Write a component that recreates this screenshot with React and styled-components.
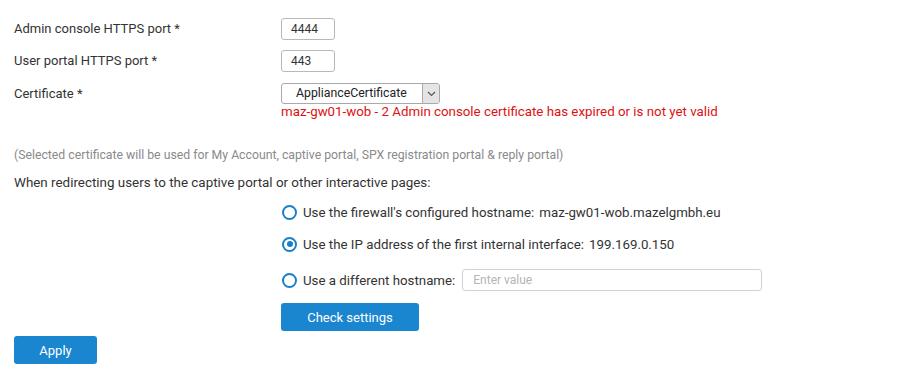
import React from 'react';
import styled, { createGlobalStyle } from 'styled-components';

const GlobalStyle = createGlobalStyle`
  body {
    margin: 0;
    background: #ffffff;
    font-family: Roboto, "Liberation Sans", sans-serif;
    font-size: 13px;
    color: #333333;
  }
`;

const Page = styled.div`
  padding: 18px 14px 0 14px;
`;

const FieldRow = styled.div`
  display: grid;
  grid-template-columns: 267px auto;
  align-items: start;
  margin-bottom: ${p => p.gap ?? 10}px;
`;

const Label = styled.label`
  line-height: 22px;
  color: #333333;
  padding-top: ${p => p.offset || 0}px;
`;

const PortInput = styled.div`
  box-sizing: border-box;
  width: 54px;
  height: 22px;
  border: 1px solid #b8b8b8;
  border-radius: 3px;
  padding: 0 9px;
  line-height: 20px;
  font-size: 12px;
  color: #333333;
`;

const Select = styled.div`
  box-sizing: border-box;
  display: flex;
  width: 159px;
  height: 21px;
  margin-top: 1px;
  border: 1px solid #a9a9a9;
  border-radius: 3px;
  overflow: hidden;
`;

const SelectValue = styled.div`
  flex: 1;
  padding-left: 14px;
  line-height: 19px;
  font-size: 12.3px;
  color: #222222;
`;

const SelectArrow = styled.div`
  width: 16px;
  border-left: 1px solid #a9a9a9;
  background: #e4e4e4;
  display: flex;
  align-items: center;
  justify-content: center;
`;

const ErrorText = styled.div`
  color: #dd1111;
  font-size: 13.3px;
  line-height: 16px;
`;

const Note = styled.div`
  margin-top: 27px;
  color: #8a8a8a;
  font-size: 12.25px;
  line-height: 16px;
`;

const Intro = styled.div`
  margin-top: 12px;
  font-size: 13.4px;
  line-height: 16px;
  color: #333333;
`;

const Options = styled.div`
  margin-left: 267px;
  margin-top: 5px;
  display: flex;
  flex-direction: column;
  font-size: 13.3px;
`;

const Option = styled.div`
  display: flex;
  align-items: center;
  height: ${p => p.h || 32}px;
  gap: 6px;
`;

const Radio = styled.span`
  box-sizing: border-box;
  width: 15px;
  height: 15px;
  margin-left: 1px;
  border-radius: 50%;
  border: 2px solid #1b7fc7;
  display: flex;
  align-items: center;
  justify-content: center;
  flex-shrink: 0;

  &::after {
    content: '';
    display: ${p => (p.checked ? 'block' : 'none')};
    width: 6px;
    height: 6px;
    border-radius: 50%;
    background: #1b7fc7;
  }
`;

const Value = styled.span`
  margin-left: 5px;
`;

const TextInput = styled.div`
  box-sizing: border-box;
  width: 300px;
  height: 22px;
  border: 1px solid #d0d0d0;
  border-radius: 3px;
  padding-left: 10px;
  line-height: 20px;
  font-size: 12px;
  color: #b5b5b5;
  margin-left: 1px;
`;

const Button = styled.button`
  box-sizing: border-box;
  display: block;
  width: ${p => p.w}px;
  height: 28px;
  border: none;
  border-radius: 3px;
  background: #1b86d0;
  color: #ffffff;
  font-family: Roboto, "Liberation Sans", sans-serif;
  font-size: 13px;
  cursor: pointer;
`;

const CheckRow = styled.div`
  margin-left: 267px;
  margin-top: 3px;
`;

const ApplyRow = styled.div`
  margin-top: 5px;
`;

export default function App() {
  return (
    <>
      <GlobalStyle />
      <Page>
        <FieldRow>
          <Label>Admin console HTTPS port *</Label>
          <PortInput>4444</PortInput>
        </FieldRow>
        <FieldRow>
          <Label>User portal HTTPS port *</Label>
          <PortInput>443</PortInput>
        </FieldRow>
        <FieldRow gap={0}>
          <Label offset={1}>Certificate *</Label>
          <div>
            <Select>
              <SelectValue>ApplianceCertificate</SelectValue>
              <SelectArrow>
                <svg width="9" height="6" viewBox="0 0 9 6">
                  <path d="M1 1 L4.5 4.5 L8 1" fill="none" stroke="#555" strokeWidth="1.2" />
                </svg>
              </SelectArrow>
            </Select>
            <ErrorText>maz-gw01-wob - 2 Admin console certificate has expired or is not yet valid</ErrorText>
          </div>
        </FieldRow>
        <Note>(Selected certificate will be used for My Account, captive portal, SPX registration portal &amp; reply portal)</Note>
        <Intro>When redirecting users to the captive portal or other interactive pages:</Intro>
        <Options>
          <Option>
            <Radio />
            <span>Use the firewall's configured hostname:<Value>maz-gw01-wob.mazelgmbh.eu</Value></span>
          </Option>
          <Option>
            <Radio checked />
            <span>Use the IP address of the first internal interface:<Value>199.169.0.150</Value></span>
          </Option>
          <Option h={40}>
            <Radio />
            <span>Use a different hostname:</span>
            <TextInput>Enter value</TextInput>
          </Option>
        </Options>
        <CheckRow>
          <Button w={138}>Check settings</Button>
        </CheckRow>
        <ApplyRow>
          <Button w={83}>Apply</Button>
        </ApplyRow>
      </Page>
    </>
  );
}
